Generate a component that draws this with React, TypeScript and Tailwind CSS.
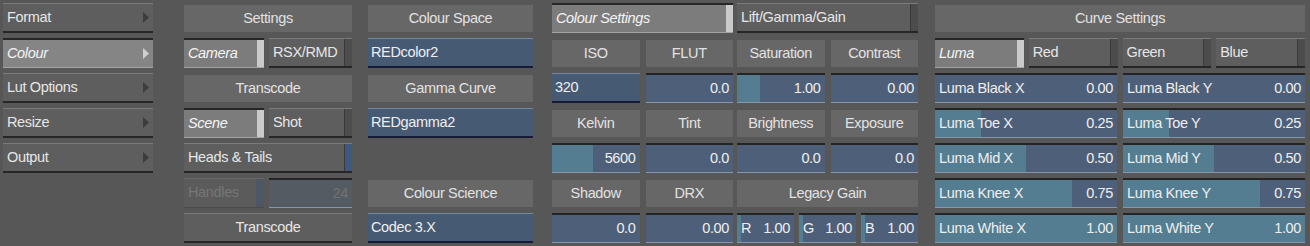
import React from "react";

type Ind = "light" | "dark" | "blue" | "dimblue" | "none";

function Label({ children, className = "" }: { children?: React.ReactNode; className?: string }) {
  return (
    <div className={`h-[30px] pt-[2px] pb-[1px] ${className}`}>
      <div className="h-full bg-[#676767] flex items-center justify-center text-[#e2e2e2]">{children}</div>
    </div>
  );
}

function Btn({
  children,
  selected = false,
  ind = "none",
  arrow = false,
  center = false,
  disabled = false,
  className = "",
}: {
  children?: React.ReactNode;
  selected?: boolean;
  ind?: Ind;
  arrow?: boolean;
  center?: boolean;
  disabled?: boolean;
  className?: string;
}) {
  const skin = selected
    ? "bg-[#7c7c7c] border-t-2 border-t-[#262626] border-b border-b-[#a3a3a3] text-[#f4f4f4] italic"
    : disabled
    ? "bg-[#5b5b5b] border-t border-t-[#666666] border-b border-b-[#4a4a4a] text-[#767676]"
    : "bg-[#5e5e5e] border-t border-t-[#7b7b7b] border-b-2 border-b-[#262626] text-[#e6e6e6]";
  return (
    <div className={`h-[30px] flex items-stretch ${skin} ${className}`}>
      <div className={`flex-1 flex items-center px-[4px] ${center ? "justify-center" : ""}`}>{children}</div>
      {ind === "light" && <div className="w-[7px] bg-[#cacaca]" />}
      {ind === "dark" && <div className="w-[8px] bg-[#4c4c4c] border-l border-l-[#3a3a3a]" />}
      {ind === "blue" && <div className="w-[8px] bg-[#3e5a82] border-l border-l-[#3a3a3a]" />}
      {ind === "dimblue" && <div className="w-[8px] bg-[#4d5766]" />}
      {arrow && (
        <div className="w-[10px] flex items-center">
          <svg width="6" height="11" viewBox="0 0 6 11">
            <path d="M0 0 L6 5.5 L0 11 Z" fill={selected ? "#d0d0d0" : "#3d3d3d"} />
          </svg>
        </div>
      )}
    </div>
  );
}

function Drop({ children }: { children?: React.ReactNode }) {
  return (
    <div className="h-[30px] bg-[#475a74] border-t border-t-[#7287a1] border-b-2 border-b-[#171b36] flex items-center px-[3px] text-[#eeeeee]">
      {children}
    </div>
  );
}

function Field({
  label,
  value,
  fill = 0,
  dim = false,
}: {
  label?: string;
  value?: string;
  fill?: number;
  dim?: boolean;
}) {
  return (
    <div
      className={`relative h-[30px] overflow-hidden border-t-2 border-t-[#242424] border-b border-b-[#8796a8] flex items-center justify-between px-[4px] ${
        dim ? "bg-[#545b63] text-[#727272]" : "bg-[#4e6079] text-[#eeeeee]"
      }`}
    >
      {fill > 0 && <div className="absolute left-0 top-0 bottom-0 bg-[#547d91]" style={{ width: `${fill}%` }} />}
      <span className="relative">{label}</span>
      <span className="relative">{value}</span>
    </div>
  );
}

export default function App() {
  return (
    <div
      className="w-[1310px] h-[246px] bg-[#575757] flex items-start pt-[3px] pl-[3px] text-[14.5px] tracking-[-0.35px] overflow-hidden"
      style={{ fontFamily: '"Liberation Sans", Arial, sans-serif' }}
    >
      {/* menu */}
      <div className="w-[150px] flex flex-col gap-[5px]">
        <Btn arrow>Format</Btn>
        <Btn arrow selected className="!bg-[#858585]">Colour</Btn>
        <Btn arrow>Lut Options</Btn>
        <Btn arrow>Resize</Btn>
        <Btn arrow>Output</Btn>
      </div>

      {/* settings */}
      <div className="ml-[31px] w-[168px] flex flex-col gap-[5px]">
        <Label>Settings</Label>
        <div className="flex gap-[5px]">
          <Btn selected ind="light" className="w-[80px]">Camera</Btn>
          <Btn ind="dark" className="flex-1">RSX/RMD</Btn>
        </div>
        <Label>Transcode</Label>
        <div className="flex gap-[5px]">
          <Btn selected ind="light" className="w-[80px]">Scene</Btn>
          <Btn ind="dark" className="flex-1">Shot</Btn>
        </div>
        <Btn ind="blue">Heads &amp; Tails</Btn>
        <div className="flex gap-[5px]">
          <Btn disabled ind="dimblue" className="w-[80px]">Handles</Btn>
          <div className="flex-1">
            <Field value="24" dim />
          </div>
        </div>
        <Btn center>Transcode</Btn>
      </div>

      {/* colour space */}
      <div className="ml-[16px] w-[165px] flex flex-col gap-[5px]">
        <Label>Colour Space</Label>
        <Drop>REDcolor2</Drop>
        <Label>Gamma Curve</Label>
        <Drop>REDgamma2</Drop>
        <div className="h-[30px]" />
        <Label>Colour Science</Label>
        <Drop>Codec 3.X</Drop>
      </div>

      {/* colour settings */}
      <div className="ml-[19px] w-[181px] flex flex-col gap-[5px]">
        <Btn selected ind="light">Colour Settings</Btn>
        <div className="grid grid-cols-2 gap-x-[6px] gap-y-[5px]">
          <Label>ISO</Label>
          <Label>FLUT</Label>
          <Drop>320</Drop>
          <Field value="0.0" />
          <Label>Kelvin</Label>
          <Label>Tint</Label>
          <Field value="5600" fill={47} />
          <Field value="0.0" />
          <Label>Shadow</Label>
          <Label>DRX</Label>
          <Field value="0.0" />
          <Field value="0.00" />
        </div>
      </div>

      {/* lift gamma gain */}
      <div className="ml-[4px] w-[181px] flex flex-col gap-[5px]">
        <Btn ind="dark">Lift/Gamma/Gain</Btn>
        <div className="grid grid-cols-2 gap-x-[6px] gap-y-[5px]">
          <Label>Saturation</Label>
          <Label>Contrast</Label>
          <Field value="1.00" fill={26} />
          <Field value="0.00" />
          <Label>Brightness</Label>
          <Label>Exposure</Label>
          <Field value="0.0" />
          <Field value="0.0" />
        </div>
        <Label>Legacy Gain</Label>
        <div className="grid grid-cols-3 gap-[5px]">
          <Field label="R" value="1.00" fill={7} />
          <Field label="G" value="1.00" fill={7} />
          <Field label="B" value="1.00" fill={7} />
        </div>
      </div>

      {/* curve settings */}
      <div className="ml-[17px] w-[370px] flex flex-col gap-[5px]">
        <Label>Curve Settings</Label>
        <div className="grid grid-cols-4 gap-[5px]">
          <Btn selected ind="light">Luma</Btn>
          <Btn ind="dark">Red</Btn>
          <Btn ind="dark">Green</Btn>
          <Btn ind="dark">Blue</Btn>
        </div>
        <div className="grid grid-cols-2 gap-x-[6px] gap-y-[5px]">
          <Field label="Luma Black X" value="0.00" />
          <Field label="Luma Black Y" value="0.00" />
          <Field label="Luma Toe X" value="0.25" fill={25} />
          <Field label="Luma Toe Y" value="0.25" fill={25} />
          <Field label="Luma Mid X" value="0.50" fill={50} />
          <Field label="Luma Mid Y" value="0.50" fill={50} />
          <Field label="Luma Knee X" value="0.75" fill={75} />
          <Field label="Luma Knee Y" value="0.75" fill={75} />
          <Field label="Luma White X" value="1.00" fill={100} />
          <Field label="Luma White Y" value="1.00" fill={100} />
        </div>
      </div>
    </div>
  );
}
